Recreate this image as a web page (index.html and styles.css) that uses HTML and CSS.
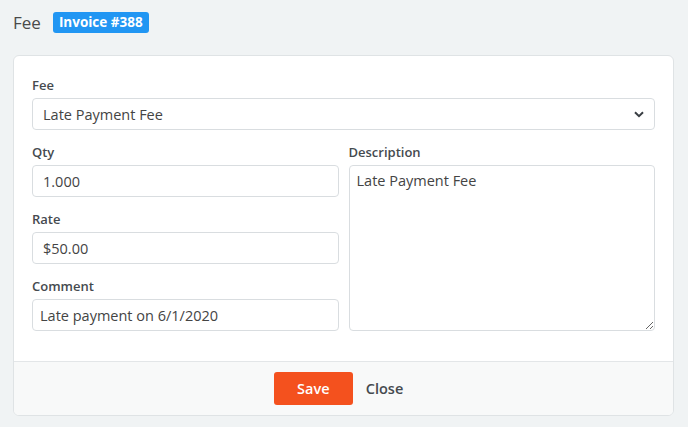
FILE: index.html
```html
<!DOCTYPE html>
<html lang="en">
<head>
<meta charset="utf-8">
<title>Fee</title>
<link rel="stylesheet" href="styles.css">
</head>
<body>
<div class="page">
  <div class="header">
    <h1 class="title">Fee</h1>
    <span class="badge">Invoice #388</span>
  </div>
  <div class="card">
    <div class="card-body">
      <div class="group">
        <label class="label">Fee</label>
        <div class="select">
          <span class="select-text">Late Payment Fee</span>
          <svg class="chevron" width="10" height="7" viewBox="0 0 10 7"><path d="M1 1.2 L5 5.2 L9 1.2" fill="none" stroke="#3a3f44" stroke-width="2"/></svg>
        </div>
      </div>
      <div class="columns">
        <div class="col">
          <div class="group">
            <label class="label">Qty</label>
            <input class="input" type="text" value="1.000">
          </div>
          <div class="group">
            <label class="label">Rate</label>
            <input class="input" type="text" value="$50.00">
          </div>
          <div class="group">
            <label class="label">Comment</label>
            <input class="input input-tight" type="text" value="Late payment on 6/1/2020">
          </div>
        </div>
        <div class="col">
          <div class="group">
            <label class="label">Description</label>
            <textarea class="textarea">Late Payment Fee</textarea>
          </div>
        </div>
      </div>
    </div>
    <div class="card-footer">
      <button class="btn btn-save">Save</button>
      <button class="btn btn-close">Close</button>
    </div>
  </div>
</div>
</body>
</html>
```

FILE: styles.css
```css
* { box-sizing: border-box; }
html, body { margin: 0; padding: 0; }
body {
  background: #f0f3f4;
  font-family: "Open Sans", "Noto Sans", sans-serif;
  color: #444;
  width: 688px;
  height: 427px;
  overflow: hidden;
}
.page { padding: 12px 14px 0 13px; }
.header {
  display: flex;
  align-items: center;
  gap: 12px;
  height: 21px;
}
.title {
  margin: 0;
  font-size: 17px;
  font-weight: 400;
  color: #4a4a4a;
  line-height: 21px;
}
.badge {
  display: inline-block;
  background: #2196f3;
  color: #fff;
  font-size: 13.5px;
  font-weight: 700;
  line-height: 21px;
  height: 21px;
  padding: 0 6px;
  border-radius: 3px;
}
.card {
  margin-top: 22px;
  background: #fff;
  border: 1px solid #dfe3e5;
  border-radius: 6px;
  overflow: hidden;
}
.card-body { padding: 20px 18px 30px 18px; }
.group { display: flex; flex-direction: column; margin-bottom: 13px; }
.label {
  font-size: 13px;
  font-weight: 600;
  color: #454a4f;
  line-height: 18px;
  margin-bottom: 4px;
}
.select {
  display: flex;
  align-items: center;
  justify-content: space-between;
  height: 32px;
  border: 1px solid #d9dde0;
  border-radius: 4px;
  padding: 0 10px 0 10px;
  font-size: 14.5px;
  color: #444;
}
.chevron { display: block; }
.columns {
  display: grid;
  grid-template-columns: 1fr 1fr;
  column-gap: 10px;
}
.input {
  height: 32px;
  border: 1px solid #d9dde0;
  border-radius: 4px;
  padding: 0 10px;
  font-family: inherit;
  font-size: 14.5px;
  color: #444;
  background: #fff;
  outline: none;
  width: 100%;
}
.input-tight { padding: 0 7px; }
.textarea {
  height: 166px;
  border: 1px solid #d9dde0;
  border-radius: 4px;
  padding: 5px 7px;
  font-family: inherit;
  font-size: 14.5px;
  line-height: 20px;
  color: #444;
  width: 100%;
  outline: none;
}
.col .group:last-child { margin-bottom: 0; }
.card-footer {
  border-top: 1px solid #e3e6e8;
  background: #f8f9f9;
  height: 54px;
  display: flex;
  align-items: center;
  justify-content: center;
  gap: 3px;
}
.btn {
  font-family: inherit;
  font-size: 14.5px;
  font-weight: 600;
  border: none;
  height: 33px;
  border-radius: 3px;
  cursor: pointer;
}
.btn-save {
  background: #f4511e;
  color: #fff;
  padding: 0;
  width: 79px;
}
.btn-close {
  background: transparent;
  color: #454a4f;
  padding: 0 10px;
}
```
